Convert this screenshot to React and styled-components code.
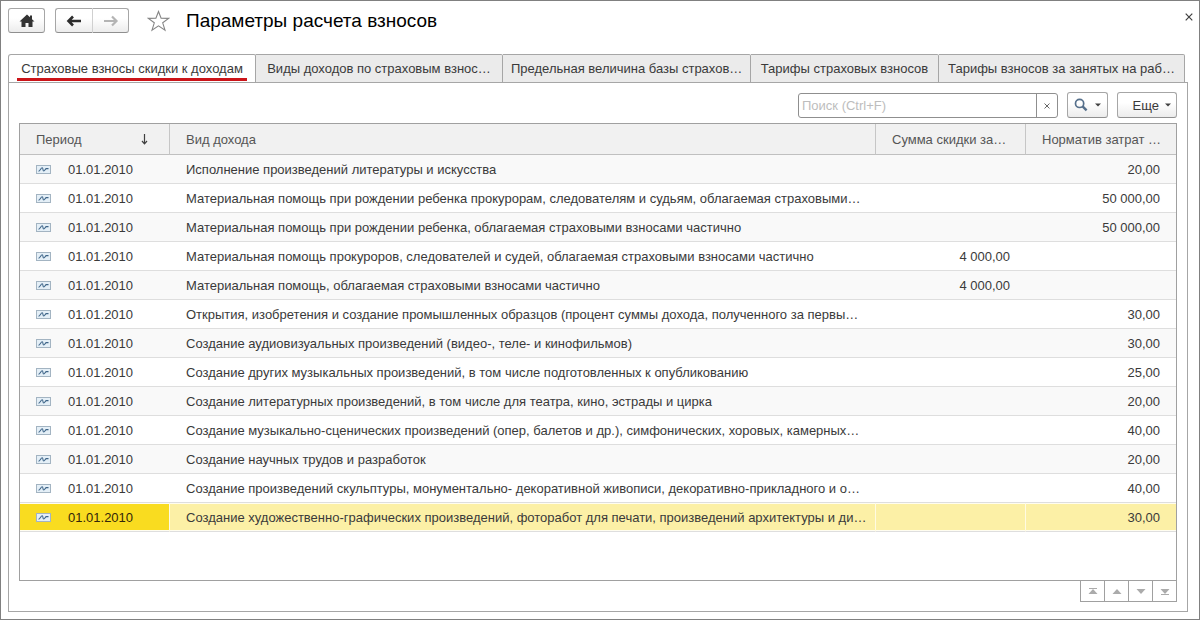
import React, { useState } from 'react'
import styled, { createGlobalStyle } from 'styled-components'

const GlobalStyle = createGlobalStyle`
    * {
        box-sizing: border-box;
    }

    body {
        margin: 0;
        background: #fff;
    }

    body, button, input {
        font-family: "Liberation Sans", Arial, sans-serif;
        font-size: 13px;
        color: #3a3a3a;
    }
`

const Window = styled.div`
    display: flex;
    flex-direction: column;
    min-height: 100vh;
    padding: 7px 11px 7px 7px;
    border: 1px solid #808080;
`

const Header = styled.header`
    display: flex;
    align-items: center;
    height: 25px;
`

const Button = styled.button`
    display: flex;
    align-items: center;
    justify-content: ${props => props.$end ? 'flex-end' : 'center'};
    gap: ${props => props.$gap || 0}px;
    width: ${props => props.$width}px;
    height: 25px;
    padding: ${props => props.$end ? '0 5px 0 0' : '0'};
    border: 1px solid #a6a6a6;
    border-bottom-color: #8f8f8f;
    border-radius: 3px;
    background: linear-gradient(#fff 40%, #ececec);
`

const ButtonGroup = styled.div`
    display: flex;
    margin: 0 18px 0 10px;

    ${Button}:first-child {
        border-right-color: #d0d0d0;
        border-radius: 3px 0 0 3px;
    }

    ${Button}:last-child {
        border-left: 0;
        border-radius: 0 3px 3px 0;
    }
`

const PlainButton = styled.button`
    display: flex;
    padding: 0;
    border: 0;
    background: none;
`

const Title = styled.h1`
    flex: 1;
    margin: 0 0 0 16px;
    font-size: 19px;
    font-weight: normal;
    color: #000;
`

const CloseButton = styled(PlainButton)`
    margin: -7px -5px 0 0;
`

const Tabs = styled.div`
    display: flex;
    margin: 21px 3px -1px 0;
`

const Tab = styled.button`
    flex: 1 1 ${props => props.$size}px;
    min-width: 0;
    height: 29px;
    padding: 0 8px;
    border: 1px solid #a6a6a6;
    border-left-width: ${props => props.$first ? 1 : 0}px;
    border-bottom-color: ${props => props.$active ? '#fff' : '#a6a6a6'};
    border-radius: ${props => props.$first ? '3px 2px 0 0' : '0 2px 0 0'};
    background: ${props => props.$active ? '#fff' : '#ebebeb'};
    text-align: center;
    white-space: nowrap;
    overflow: hidden;
`

const TabLabel = styled.span`
    display: block;
    margin-top: ${props => props.$active ? 4 : 0}px;
    line-height: 18px;
    border-bottom: ${props => props.$active ? '3px solid #cb1419' : '0'};
`

const Panel = styled.main`
    flex: 1;
    display: flex;
    flex-direction: column;
    padding: 9px 10px;
    border: 1px solid #a6a6a6;
`

const Toolbar = styled.div`
    display: flex;
    justify-content: flex-end;
    gap: 9px;
    margin-bottom: 5px;

    ${Button} {
        height: 26px;
    }
`

const SearchBox = styled.div`
    display: flex;
    width: 260px;
    height: 25px;
    margin-top: 1px;
    border: 1px solid #8f8f8f;
    border-radius: 3px;
    background: #fff;
`

const SearchInput = styled.input`
    flex: 1;
    min-width: 0;
    padding: 0 3px;
    border: 0;
    outline: 0;
    background: none;

    &::placeholder {
        color: #bdbdbd;
        opacity: 1;
    }
`

const ClearButton = styled(PlainButton)`
    align-items: center;
    justify-content: center;
    width: 21px;
    border-left: 1px solid #8f8f8f;
`

const TableFrame = styled.div`
    flex: 1;
    border: 1px solid #a0a0a0;
`

const Table = styled.table`
    width: 100%;
    table-layout: fixed;
    border-collapse: separate;
    border-spacing: 0;
`

const Col = styled.col`
    width: ${props => props.$width}px;
`

const HeadCell = styled.th`
    height: 31px;
    padding: 0 16px;
    border-right: 1px solid #c6c6c6;
    border-bottom: 1px solid #c0c0c0;
    background: #f1f1f1;
    font-weight: normal;
    color: #555;
    text-align: left;
    white-space: nowrap;
    overflow: hidden;

    &:last-child {
        border-right: 0;
    }
`

const SortLabel = styled.div`
    display: flex;
    align-items: center;
    justify-content: space-between;
    padding-right: 5px;
`

const Cell = styled.td`
    height: 29px;
    padding: 0 16px;
    border-bottom: 1px solid #dedede;
    text-align: ${props => props.$number ? 'right' : 'left'};
    white-space: nowrap;
    overflow: hidden;
`

const Row = styled.tr`
    background: #fff;

    &:nth-child(odd) {
        background: #f9f9f9;
    }

    &&[aria-selected='true'] ${Cell} {
        background: #fcf0a6;
        border-right: 1px solid #fffbe2;
        box-shadow: inset 0 1px #fffdf0, inset 0 -1px #fffdf0;
    }

    &&[aria-selected='true'] ${Cell}:first-child {
        background: #f9dc20;
        color: #33260a;
    }

    &&[aria-selected='true'] ${Cell}:last-child {
        border-right: 0;
    }
`

const Period = styled.div`
    display: flex;
    align-items: center;
    gap: 17px;
`

const Pager = styled.nav`
    display: flex;
    align-self: flex-end;
    margin-top: -1px;
    border: 1px solid #a0a0a0;
`

const PagerButton = styled(PlainButton)`
    align-items: center;
    justify-content: center;
    width: 24px;
    height: 20px;

    & + & {
        border-left: 1px solid #a0a0a0;
    }

    &:first-child {
        width: 23px;
    }
`

const HomeIcon = () => (
    <svg width="16" height="14" viewBox="0 0 16 14" fill="#333">
        <path d="M8 0.5 L11 3.3 V1.5 H13 V5.2 L15.5 7.5 H13.5 V13 H9.5 V9 H6.5 V13 H2.5 V7.5 H0.5 Z" />
    </svg>
)

const ArrowIcon = ({ right }) => (
    <svg width="16" height="12" viewBox="0 0 16 12" fill="none" stroke={right ? '#b4b4b4' : '#2d2d2d'}>
        {right
            ? <path d="M1 6 H13 M9 1.5 L13.5 6 L9 10.5" strokeWidth="2.2" />
            : <path d="M15 6 H3 M7 1.5 L2.5 6 L7 10.5" strokeWidth="2.6" />}
    </svg>
)

const StarIcon = () => (
    <svg width="23" height="22" viewBox="0 0 23 22" fill="#fff" stroke="#858585" strokeWidth="1.1">
        <path d="M11.5 1.5 L14.1 8.3 L21.6 8.4 L15.7 12.8 L18 20.2 L11.5 15.8 L5 20.2 L7.3 12.8 L1.4 8.4 L8.9 8.3 Z" />
    </svg>
)

const CrossIcon = ({ size, color }) => (
    <svg width={size} height={size} viewBox="0 0 8 8" stroke={color} strokeWidth="1.2">
        <path d="M0.7 0.7 L7.3 7.3 M7.3 0.7 L0.7 7.3" />
    </svg>
)

const SearchIcon = () => (
    <svg width="14" height="14" viewBox="0 0 14 14" fill="none" stroke="#56708c">
        <circle cx="5.6" cy="5.4" r="4.1" strokeWidth="1.7" />
        <path d="M8.6 8.4 L12.6 12.4" strokeWidth="2.4" />
    </svg>
)

const CaretIcon = () => (
    <svg width="6" height="4" viewBox="0 0 6 4" fill="#404040">
        <path d="M0 0.5 H6 L3 3.5 Z" />
    </svg>
)

const SortIcon = () => (
    <svg width="7" height="11" viewBox="0 0 7 11" fill="none" stroke="#404040" strokeWidth="1.2">
        <path d="M3.5 0 V10 M1 7 L3.5 9.8 L6 7" />
    </svg>
)

const RecordIcon = () => (
    <svg width="15" height="9" viewBox="0 0 15 9">
        <rect x="0.5" y="0.5" width="14" height="8" fill="#e4eff7" stroke="#a3b4c2" />
        <path d="M2.5 6.3 C4 6.3 4.8 2.8 6.2 2.8 C7.4 2.8 6.4 6 7.8 6 C9 6 9.2 3.6 10.4 3.6 H12.5" fill="none" stroke="#3d6488" strokeWidth="1.1" />
    </svg>
)

const PagerIcon = ({ down, edge }) => (
    <svg width="10" height="7" viewBox="0 0 10 7" fill="#ababab">
        <g transform={down ? 'rotate(180 5 3.5)' : undefined}>
            {edge && <rect x="1" y="0" width="8" height="1" />}
            <path d="M5 1 L9.5 6 H0.5 Z" />
        </g>
    </svg>
)

// size is the preferred width, tabs grow and shrink together from there
const tabs = [
    { title: 'Страховые взносы скидки к доходам', size: 248 },
    { title: 'Виды доходов по страховым взнос…', size: 247 },
    { title: 'Предельная величина базы страхов…', size: 248 },
    { title: 'Тарифы страховых взносов', size: 188 },
    { title: 'Тарифы взносов за занятых на раб…', size: 246 },
]

const rows = [
    { name: 'Исполнение произведений литературы и искусства', rate: '20,00' },
    { name: 'Материальная помощь при рождении ребенка прокурорам, следователям и судьям, облагаемая страховыми…', rate: '50 000,00' },
    { name: 'Материальная помощь при рождении ребенка, облагаемая страховыми взносами частично', rate: '50 000,00' },
    { name: 'Материальная помощь прокуроров, следователей и судей, облагаемая страховыми взносами частично', sum: '4 000,00' },
    { name: 'Материальная помощь, облагаемая страховыми взносами частично', sum: '4 000,00' },
    { name: 'Открытия, изобретения и создание промышленных образцов (процент суммы дохода, полученного за первы…', rate: '30,00' },
    { name: 'Создание аудиовизуальных произведений (видео-, теле- и кинофильмов)', rate: '30,00' },
    { name: 'Создание других музыкальных произведений, в том числе подготовленных к опубликованию', rate: '25,00' },
    { name: 'Создание литературных произведений, в том числе для театра, кино, эстрады и цирка', rate: '20,00' },
    { name: 'Создание музыкально-сценических произведений (опер, балетов и др.), симфонических, хоровых, камерных…', rate: '40,00' },
    { name: 'Создание научных трудов и разработок', rate: '20,00' },
    { name: 'Создание произведений скульптуры, монументально- декоративной живописи, декоративно-прикладного и о…', rate: '40,00' },
    { name: 'Создание художественно-графических произведений, фоторабот для печати, произведений архитектуры и ди…', rate: '30,00' },
]

const App = () => {
    const [tab, setTab] = useState(0)
    const [selected, setSelected] = useState(12)
    const [search, setSearch] = useState('')

    return (
        <Window>
            <GlobalStyle />
            <Header>
                <Button $width={37} aria-label="Домой"><HomeIcon /></Button>
                <ButtonGroup>
                    <Button $width={38} aria-label="Назад"><ArrowIcon /></Button>
                    <Button $width={36} aria-label="Вперед"><ArrowIcon right /></Button>
                </ButtonGroup>
                <PlainButton aria-label="В избранное"><StarIcon /></PlainButton>
                <Title>Параметры расчета взносов</Title>
                <CloseButton aria-label="Закрыть"><CrossIcon size={8} color="#404040" /></CloseButton>
            </Header>
            <Tabs role="tablist">
                {tabs.map((item, i) => (
                    <Tab
                        key={item.title}
                        role="tab"
                        aria-selected={i === tab}
                        $size={item.size}
                        $first={i === 0}
                        $active={i === tab}
                        onClick={() => setTab(i)}
                    >
                        <TabLabel $active={i === tab}>{item.title}</TabLabel>
                    </Tab>
                ))}
            </Tabs>
            <Panel>
                <Toolbar>
                    <SearchBox>
                        <SearchInput
                            aria-label="Поиск"
                            placeholder="Поиск (Ctrl+F)"
                            value={search}
                            onChange={e => setSearch(e.target.value)}
                        />
                        <ClearButton aria-label="Очистить" onClick={() => setSearch('')}>
                            <CrossIcon size={6} color="#555" />
                        </ClearButton>
                    </SearchBox>
                    <Button $width={41} $gap={7} aria-label="Найти"><SearchIcon /><CaretIcon /></Button>
                    <Button $width={60} $gap={6} $end>Еще<CaretIcon /></Button>
                </Toolbar>
                <TableFrame>
                    <Table>
                        <colgroup>
                            <Col $width={150} />
                            <col />
                            <Col $width={150} />
                            <Col $width={150} />
                        </colgroup>
                        <thead>
                            <tr>
                                <HeadCell><SortLabel>Период<SortIcon /></SortLabel></HeadCell>
                                <HeadCell>Вид дохода</HeadCell>
                                <HeadCell>Сумма скидки за…</HeadCell>
                                <HeadCell>Норматив затрат …</HeadCell>
                            </tr>
                        </thead>
                        <tbody>
                            {rows.map((row, i) => (
                                <Row key={row.name} aria-selected={i === selected} onClick={() => setSelected(i)}>
                                    <Cell><Period><RecordIcon />01.01.2010</Period></Cell>
                                    <Cell>{row.name}</Cell>
                                    <Cell $number>{row.sum}</Cell>
                                    <Cell $number>{row.rate}</Cell>
                                </Row>
                            ))}
                        </tbody>
                    </Table>
                </TableFrame>
                <Pager>
                    <PagerButton aria-label="В начало"><PagerIcon edge /></PagerButton>
                    <PagerButton aria-label="Вверх"><PagerIcon /></PagerButton>
                    <PagerButton aria-label="Вниз"><PagerIcon down /></PagerButton>
                    <PagerButton aria-label="В конец"><PagerIcon down edge /></PagerButton>
                </Pager>
            </Panel>
        </Window>
    )
}

export default App
